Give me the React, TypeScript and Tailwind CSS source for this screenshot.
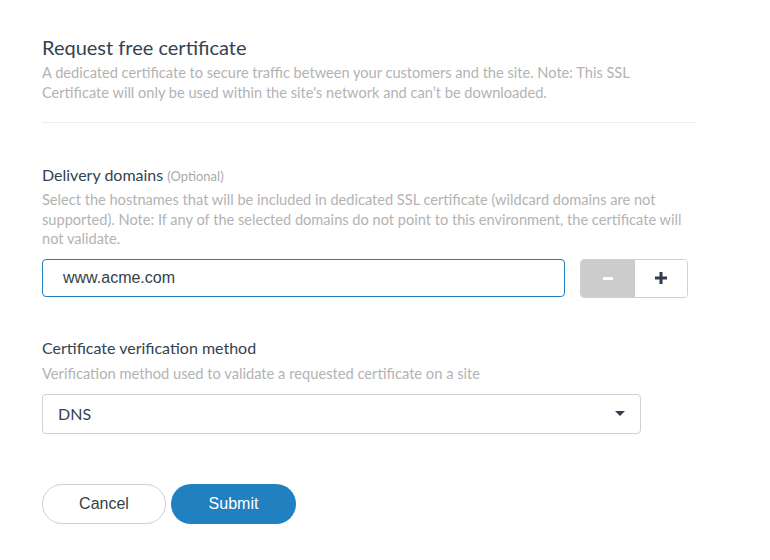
export default function App() {
  return (
    <main className="min-h-screen w-[770px] bg-white pl-[42px] pt-[34px] font-['Lato',sans-serif]">
      <div className="w-[655px]">
        <h1 className="text-[20px] leading-[26px] text-[#34424f]">Request free certificate</h1>
        <p className="mt-[3px] w-[610px] text-[14.6px] leading-[20px] text-[#b3b3b3]">
          A dedicated certificate to secure traffic between your customers and the site. Note: This SSL Certificate
          will only be used within the site's network and can’t be downloaded.
        </p>
        <div className="mt-[19px] border-t border-[#eeeeee]" />
      </div>

      <section className="mt-[41px]">
        <h2 className="text-[16px] leading-[22px] text-[#34424f]">
          Delivery domains <span className="text-[13px] text-[#ababab]">(Optional)</span>
        </h2>
        <p className="mt-[3px] w-[650px] text-[14.6px] leading-[19.5px] text-[#b3b3b3]">
          Select the hostnames that will be included in dedicated SSL certificate (wildcard domains are not
          supported). Note: If any of the selected domains do not point to this environment, the certificate will
          not validate.
        </p>
        <div className="mt-[10px] flex items-center gap-[15px]">
          <div className="flex h-[38px] w-[523px] items-center rounded-[4px] border border-[#2180c0] pl-[20px] font-['Liberation_Sans',sans-serif] text-[16px] text-[#333f4a]">
            www.acme.com
          </div>
          <div className="flex h-[39px] w-[108px] overflow-hidden rounded-[4px] border border-[#d0d0d0]">
            <div className="flex w-[54px] items-center justify-center bg-[#cccccc]">
              <div className="h-[3px] w-[10px] bg-white" />
            </div>
            <div className="flex flex-1 items-center justify-center bg-white">
              <svg width="12" height="12" viewBox="0 0 12 12">
                <rect x="4.5" y="0" width="3" height="12" fill="#2f3d4c" />
                <rect x="0" y="4.5" width="12" height="3" fill="#2f3d4c" />
              </svg>
            </div>
          </div>
        </div>
      </section>

      <section className="mt-[39px]">
        <h2 className="text-[16px] leading-[22px] text-[#34424f]">Certificate verification method</h2>
        <p className="mt-[4px] text-[14.7px] leading-[20px] text-[#b3b3b3]">
          Verification method used to validate a requested certificate on a site
        </p>
        <div className="mt-[11px] flex h-[40px] w-[599px] items-center justify-between rounded-[4px] border border-[#d0d0d0] pl-[15px] pr-[15px]">
          <span className="text-[16px] text-[#34424f]">DNS</span>
          <svg width="10" height="6" viewBox="0 0 10 6">
            <path d="M0 0 H10 L5 5 Z" fill="#2f3d4c" />
          </svg>
        </div>
      </section>

      <div className="mt-[50px] flex gap-[5px] font-['Liberation_Sans',sans-serif] text-[16px]">
        <button className="h-[40px] w-[124px] rounded-full border border-[#cfcfcf] bg-white text-[#333f4a]">
          Cancel
        </button>
        <button className="h-[40px] w-[125px] rounded-full bg-[#2180c0] text-white">Submit</button>
      </div>
    </main>
  );
}
